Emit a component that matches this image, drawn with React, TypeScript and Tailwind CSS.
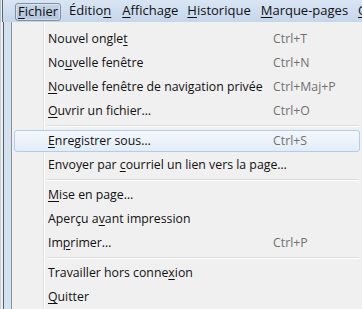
import React from "react";

const U = ({ children }: { children: React.ReactNode }) => (
  <span className="underline underline-offset-2 decoration-1">{children}</span>
);

type Item = { label: React.ReactNode; sc?: string; hl?: boolean } | "sep";

const items: Item[] = [
  { label: <>Nouvel ongle<U>t</U></>, sc: "Ctrl+T" },
  { label: <>No<U>u</U>velle fenêtre</>, sc: "Ctrl+N" },
  { label: <><U>N</U>ouvelle fenêtre de navigation privée</>, sc: "Ctrl+Maj+P" },
  { label: <><U>O</U>uvrir un fichier…</>, sc: "Ctrl+O" },
  "sep",
  { label: <><U>E</U>nregistrer sous…</>, sc: "Ctrl+S", hl: true },
  { label: <>Envoyer par <U>c</U>ourriel un lien vers la page…</> },
  "sep",
  { label: <><U>M</U>ise en page…</> },
  { label: <>Aperçu a<U>v</U>ant impression</> },
  { label: <>Im<U>p</U>rimer…</>, sc: "Ctrl+P" },
  "sep",
  { label: <>Travailler hors conne<U>x</U>ion</> },
  { label: <><U>Q</U>uitter</> },
];

export default function App() {
  return (
    <div
      className="w-[362px] h-[309px] overflow-hidden bg-[#f0f0f0] text-[12.3px] text-[#111] flex flex-col font-[500]"
      style={{ fontFamily: '"Open Sans", "Noto Sans", sans-serif' }}
    >
      {/* menu bar */}
      <div className="h-[22px] flex items-stretch bg-gradient-to-b from-[#d9e5f3] to-[#c5d6eb] shrink-0 text-[13px] whitespace-nowrap overflow-hidden">
        <div className="w-[4px] flex shrink-0">
          <div className="w-[1px] bg-[#b9c3cf]" />
          <div className="w-[1px] bg-[#e8eef5]" />
          <div className="w-[1px] bg-[#5d6670]" />
        </div>
        <div className="flex items-center pl-[11px] shrink-0">
          <div className="h-[18px] mt-[1px] px-[2px] flex items-center border border-[#7f8fa3] rounded-[3px] bg-gradient-to-b from-[#c5d5e7] to-[#b2c5dc] shadow-[inset_0_0_0_1px_rgba(255,255,255,0.4)] shrink-0">
            <U>F</U>ichier
          </div>
          <div className="ml-[8px] shrink-0">Éditio<U>n</U></div>
          <div className="ml-[11px] shrink-0"><U>A</U>ffichage</div>
          <div className="ml-[9px] shrink-0"><U>H</U>istorique</div>
          <div className="ml-[10px] shrink-0"><U>M</U>arque-pages</div>
          <div className="ml-[10px] shrink-0"><U>O</U>utils</div>
        </div>
      </div>

      <div className="flex flex-1">
        {/* left window frame strip */}
        <div className="w-[11px] flex shrink-0">
          <div className="w-[1px] bg-[#c9ced4]" />
          <div className="w-[2px] bg-[#eef1f4]" />
          <div className="w-[1px] bg-[#555c64]" />
          <div className="flex-1 bg-[#d3e1f0]" />
        </div>
        {/* dropdown */}
        <div className="flex-1 border-l border-[#8d9096] bg-[#f0f0f0] relative pt-[5px] pl-[2px]">
          <div className="absolute left-[31px] top-0 bottom-0 w-[1px] bg-[#e2e3e3]" />
          <div className="absolute left-[32px] top-0 bottom-0 w-[1px] bg-white" />
          <div className="flex flex-col relative">
            {items.map((it, i) =>
              it === "sep" ? (
                <div key={i} className="h-[6px] flex flex-col justify-center pl-[33px] pr-[3px]">
                  <div className="h-[1px] bg-[#dcdcdc]" />
                  <div className="h-[1px] bg-white" />
                </div>
              ) : (
                <div key={i} className="h-[24px] flex items-stretch py-[1px]">
                  <div
                    className={
                      "flex-1 flex items-center rounded-[3px] border mr-[2px] " +
                      (it.hl
                        ? "border-[#b0cdef] bg-gradient-to-b from-[#f4f8fd] to-[#e2ecf8]"
                        : "border-transparent")
                    }
                  >
                    <div className="pl-[33px] w-[258px] whitespace-nowrap">{it.label}</div>
                    <div className="text-[#707070] font-normal whitespace-nowrap">{it.sc}</div>
                  </div>
                </div>
              )
            )}
          </div>
        </div>
      </div>
    </div>
  );
}
